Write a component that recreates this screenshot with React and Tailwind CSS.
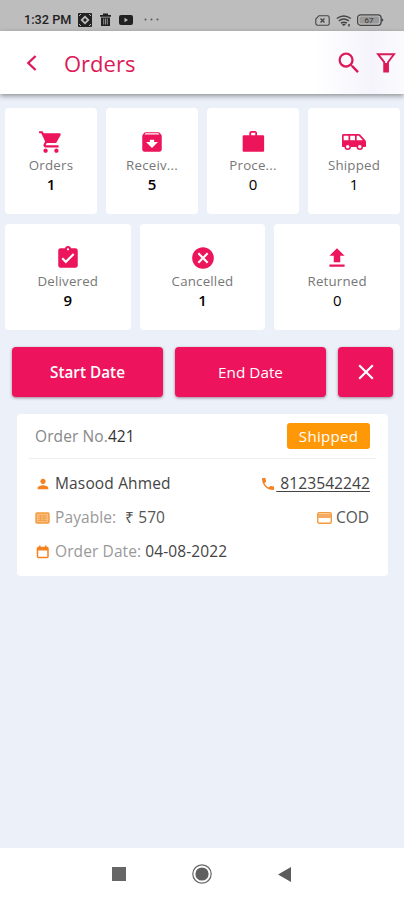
import React from "react";
import {
  MdShoppingCart,
  MdArchive,
  MdAssignmentTurnedIn,
  MdCancel,
  MdFileUpload,
  MdSearch,
  MdClose,
  MdPerson,
  MdPhone,
} from "react-icons/md";

function Briefcase() {
  return (
    <svg viewBox="0 0 24 24" className="h-[25px] w-[25px]" fill="currentColor">
      <path d="M8 6V4c0-1.300.8-2.200 2-2.200h3.400c1.200 0 2 .9 2 2.200v2H21c.7 0 1.200.5 1.200 1.200v13.400c0 .8-.5 1.300-1.200 1.300H2.800c-.7 0-1.200-.5-1.200-1.300V7.200C1.600 6.500 2.100 6 2.800 6H8Zm1.800 0h3.900V3.500H9.800V6Z" fillRule="evenodd" />
    </svg>
  );
}

function Van() {
  return (
    <svg viewBox="0 0 26 18" className="h-[18px] w-[26px]" fill="currentColor">
      <path d="M2.500 1h15.300c.6 0 1.100.2 1.500.7l5 5.600c.4.400.7 1 .7 1.600V13c0 .6-.4 1-1 1H2c-.6 0-1-.4-1-1V2.500C1 1.700 1.700 1 2.500 1ZM2.700 2.700v4.600h4.800V2.700Zm6.500 0v4.600H14V2.700Zm6.500 0v4.600h6.200l-4.100-4.600Z" fillRule="evenodd" />
      <circle cx="6.700" cy="13.700" r="2.500" fill="#fff" stroke="currentColor" strokeWidth="1.500" />
      <circle cx="18.800" cy="13.700" r="2.500" fill="#fff" stroke="currentColor" strokeWidth="1.500" />
    </svg>
  );
}

function StatCard({ icon, label, value, bold }) {
  return (
    <div className="flex h-[106px] min-w-0 flex-1 flex-col items-center rounded-[4px] bg-white pt-[20px]">
      <div className="flex h-[27px] items-center justify-center text-[26px] text-[#ec145b]">{icon}</div>
      <div className="mt-[1px] text-[13.3px] leading-[18px] tracking-[0.2px] text-[#777]">{label}</div>
      <div className={"text-[15px] leading-[20px] text-black " + (bold ? "font-semibold" : "font-normal")}>{value}</div>
    </div>
  );
}

function StatusBar() {
  return (
    <div className="flex h-[31px] items-start bg-[#bdbdbd] pt-[12px] pr-[20px] pl-[24px] text-[#222]">
      <span className="w-[54px] font-[Roboto,sans-serif] text-[12.7px] leading-[16px] font-medium whitespace-nowrap">1:32 PM</span>
      <svg className="mt-[1px] h-[14px] w-[14px]" viewBox="0 0 14 14">
        <rect width="14" height="14" rx="1" fill="#222" />
        <path d="M7 2.500 11.500 7 7 11.500 2.500 7Z" fill="#bdbdbd" />
        <path d="M7 5 9 7 7 9 5 7Z" fill="#222" />
        <path d="M1 3 3 1M11 1l2 2M1 11l2 2M11 13l2-2" stroke="#bdbdbd" strokeWidth="1" />
      </svg>
      <svg className="mt-[1px] ml-[8px] h-[13px] w-[11px]" viewBox="0 0 11 13">
        <path d="M0 2h3V.5h5V2h3v1.700H0ZM1 4.500h9V13H1Z" fill="#222" />
        <path d="M3.700 5.500v6M5.500 5.500v6M7.300 5.500v6" stroke="#bdbdbd" strokeWidth=".7" />
      </svg>
      <svg className="mt-[3px] ml-[8px] h-[10px] w-[14px]" viewBox="0 0 14 10">
        <rect width="14" height="10" rx="2" fill="#222" />
        <path d="M5.500 2.800v4.400L9 5Z" fill="#bdbdbd" />
      </svg>
      <svg className="mt-[6px] ml-[11px] h-[3px] w-[16px]" viewBox="0 0 16 3" fill="#555">
        <circle cx="1.500" cy="1.500" r="1" />
        <circle cx="7.500" cy="1.500" r="1" />
        <circle cx="13.500" cy="1.500" r="1" />
      </svg>
      <span className="flex-1" />
      <svg className="mt-[3px] h-[11px] w-[15px]" viewBox="0 0 15 11" fill="none" stroke="#444">
        <path d="M4 .7h8.500q1.700 0 1.700 1.700v6.200q0 1.700-1.700 1.700h-10Q.8 10.300.8 8.600V4Z" strokeWidth="1.100" />
        <path d="m5.500 3.500 4 4m0-4-4 4" strokeWidth="1.300" />
      </svg>
      <svg className="mt-[3px] ml-[6px] h-[12px] w-[16px]" viewBox="0 0 16 12" fill="none" stroke="#444" strokeWidth="1.500">
        <path d="M.8 3.500q7-5 14 0M2.800 5.900q5-3.600 10 0M4.900 8.200q3-2 6 0" />
        <path d="m6 9 1.800 2L9.600 9Z" fill="#444" strokeWidth=".4" />
        <path d="M13 9v2.500" />
      </svg>
      <svg className="mt-[2px] ml-[5px] h-[12px] w-[27px]" viewBox="0 0 27 12">
        <rect x=".6" y=".8" width="23.500" height="10.500" rx="3" fill="none" stroke="#444" strokeWidth="1.200" />
        <rect x="2.500" y="2.600" width="19.500" height="6.900" rx="1.500" fill="#999" />
        <path d="M24.500 3.500 26.500 6l-2 2.500Z" fill="#444" />
        <text x="12" y="8.800" textAnchor="middle" fontFamily="Roboto" fontSize="8" fill="#333">67</text>
      </svg>
    </div>
  );
}

function Header() {
  return (
    <header className="z-10 flex h-[63px] items-center bg-[linear-gradient(90deg,#fff_78%,#f5f4fc_92%,#fbfbfe)] pr-[8px] pl-[26px] text-[#dc1a58] shadow-[0_2px_5px_rgba(0,0,0,0.4)]">
      <svg className="h-[18px] w-[12px]" viewBox="0 0 12 18" fill="none" stroke="currentColor" strokeWidth="2.300">
        <path d="M9.600 2 2.300 9l7.300 7" />
      </svg>
      <h1 className="ml-[26px] flex-1 text-[22px] leading-[30px]">Orders</h1>
      <MdSearch className="h-[28px] w-[28px]" />
      <svg className="ml-[13px] h-[20px] w-[20px]" viewBox="0 0 20 20" fill="none" stroke="currentColor" strokeWidth="1.900">
        <path d="M2 1.200h16L12 9.200v9.300H8.200V9.200Z" />
        <path d="M10 10v8.500" strokeWidth="3" />
      </svg>
    </header>
  );
}

const buttonStyle =
  "flex h-[50px] items-center justify-center rounded-[4px] bg-[#ee135d] text-white shadow-[0_1px_3px_rgba(70,20,50,0.5)]";

function OrderCard() {
  return (
    <section className="mx-[17px] mt-[17px] h-[162px] w-[371px] rounded-[4px] bg-white pr-[18px] pl-[18px] text-[15.5px]">
      <div className="-mx-[6px] flex h-[45px] items-center justify-between border-b border-[#eeeeee] px-[6px]">
        <div className="pt-[2px] tracking-[0.1px] text-[#888]">
          Order No.<span className="text-[#333]">421</span>
        </div>
        <div className="flex h-[26px] w-[83px] items-center justify-center rounded-[3px] bg-[#ff9807] text-[15px] tracking-[0.3px] text-white">Shipped</div>
      </div>
      <div className="mt-[8px] flex h-[34px] items-center text-[#444]">
        <MdPerson className="h-[16px] w-[16px] text-[#f58220]" />
        <span className="ml-[4px] flex-1 tracking-[0.15px]">Masood Ahmed</span>
        <MdPhone className="h-[16px] w-[16px] text-[#f58220]" />
        <span className="text-[15.7px] whitespace-pre underline underline-offset-[2px]"> 8123542242</span>
      </div>
      <div className="flex h-[34px] items-center">
        <svg className="h-[12px] w-[15px] text-[#f39a3d]" viewBox="0 0 15 12">
          <rect x="1" y="1" width="13" height="10" rx="1" fill="#f8bd7f" stroke="currentColor" strokeWidth="1.400" />
          <path d="M3 4h9M3 6.200h9M3 8.400h9M5.500 3v6M9 3v6" stroke="currentColor" strokeWidth=".8" />
        </svg>
        <span className="ml-[5px] tracking-[0.1px] text-[#999]">Payable:</span>
        <span className="ml-[9px] flex-1 text-[#555]">₹ 570</span>
        <svg className="h-[12px] w-[15px] text-[#f39a3d]" viewBox="0 0 15 12">
          <rect x=".7" y=".7" width="13.600" height="10.600" rx="1.500" fill="none" stroke="currentColor" strokeWidth="1.400" />
          <path d="M1 2h13v4H1Z" fill="#f4ac65" />
        </svg>
        <span className="mr-[1px] ml-[4px] text-[#555]">COD</span>
      </div>
      <div className="flex h-[34px] items-center">
        <svg className="ml-[1px] h-[14px] w-[14px] text-[#f58220]" viewBox="0 0 14 14">
          <rect x="1.500" y="2.500" width="10.500" height="10" rx="1" fill="none" stroke="currentColor" strokeWidth="1.500" />
          <path d="M1.500 2.500H12v3H1.500ZM3 .5h1.600v2H3ZM9 .5h1.600v2H9Z" fill="currentColor" />
        </svg>
        <span className="ml-[5px] tracking-[0.1px] text-[#999]">
          Order Date: <span className="text-[#444]">04-08-2022</span>
        </span>
      </div>
    </section>
  );
}

export default function App() {
  return (
    <div className="flex h-[900px] w-[404px] flex-col overflow-hidden bg-[#ecf1f9] font-['Open_Sans',sans-serif]">
      <StatusBar />
      <Header />
      <main className="flex-1">
        <div className="mt-[14px] flex gap-[9px] pr-[4px] pl-[5px]">
          <StatCard icon={<MdShoppingCart />} label="Orders" value="1" bold />
          <StatCard icon={<MdArchive />} label="Receiv..." value="5" bold />
          <StatCard icon={<Briefcase />} label="Proce..." value="0" />
          <StatCard icon={<Van />} label="Shipped" value="1" />
        </div>
        <div className="mt-[10px] flex gap-[9px] pr-[4px] pl-[5px]">
          <StatCard icon={<MdAssignmentTurnedIn />} label="Delivered" value="9" bold />
          <StatCard icon={<MdCancel />} label="Cancelled" value="1" bold />
          <StatCard icon={<MdFileUpload />} label="Returned" value="0" />
        </div>
        <div className="mt-[17px] flex gap-[12px] pl-[12px] text-[15.3px]">
          <button className={buttonStyle + " w-[151px] font-semibold"}>Start Date</button>
          <button className={buttonStyle + " w-[151px]"}>End Date</button>
          <button className={buttonStyle + " w-[55px]"}>
            <MdClose className="h-[26px] w-[26px]" />
          </button>
        </div>
        <OrderCard />
      </main>
      <nav className="flex h-[52px] items-center bg-white pl-[112px]">
        <span className="h-[14px] w-[14px] bg-[#666]" />
        <svg className="ml-[66px] h-[20px] w-[20px]" viewBox="0 0 20 20">
          <circle cx="10" cy="10" r="9.200" fill="none" stroke="#666" strokeWidth="1.200" />
          <circle cx="10" cy="10" r="6.600" fill="#606060" />
        </svg>
        <svg className="ml-[66px] h-[15px] w-[13px]" viewBox="0 0 13 15">
          <path d="M13 0v15L0 7.500Z" fill="#5c5c5c" />
        </svg>
      </nav>
    </div>
  );
}
